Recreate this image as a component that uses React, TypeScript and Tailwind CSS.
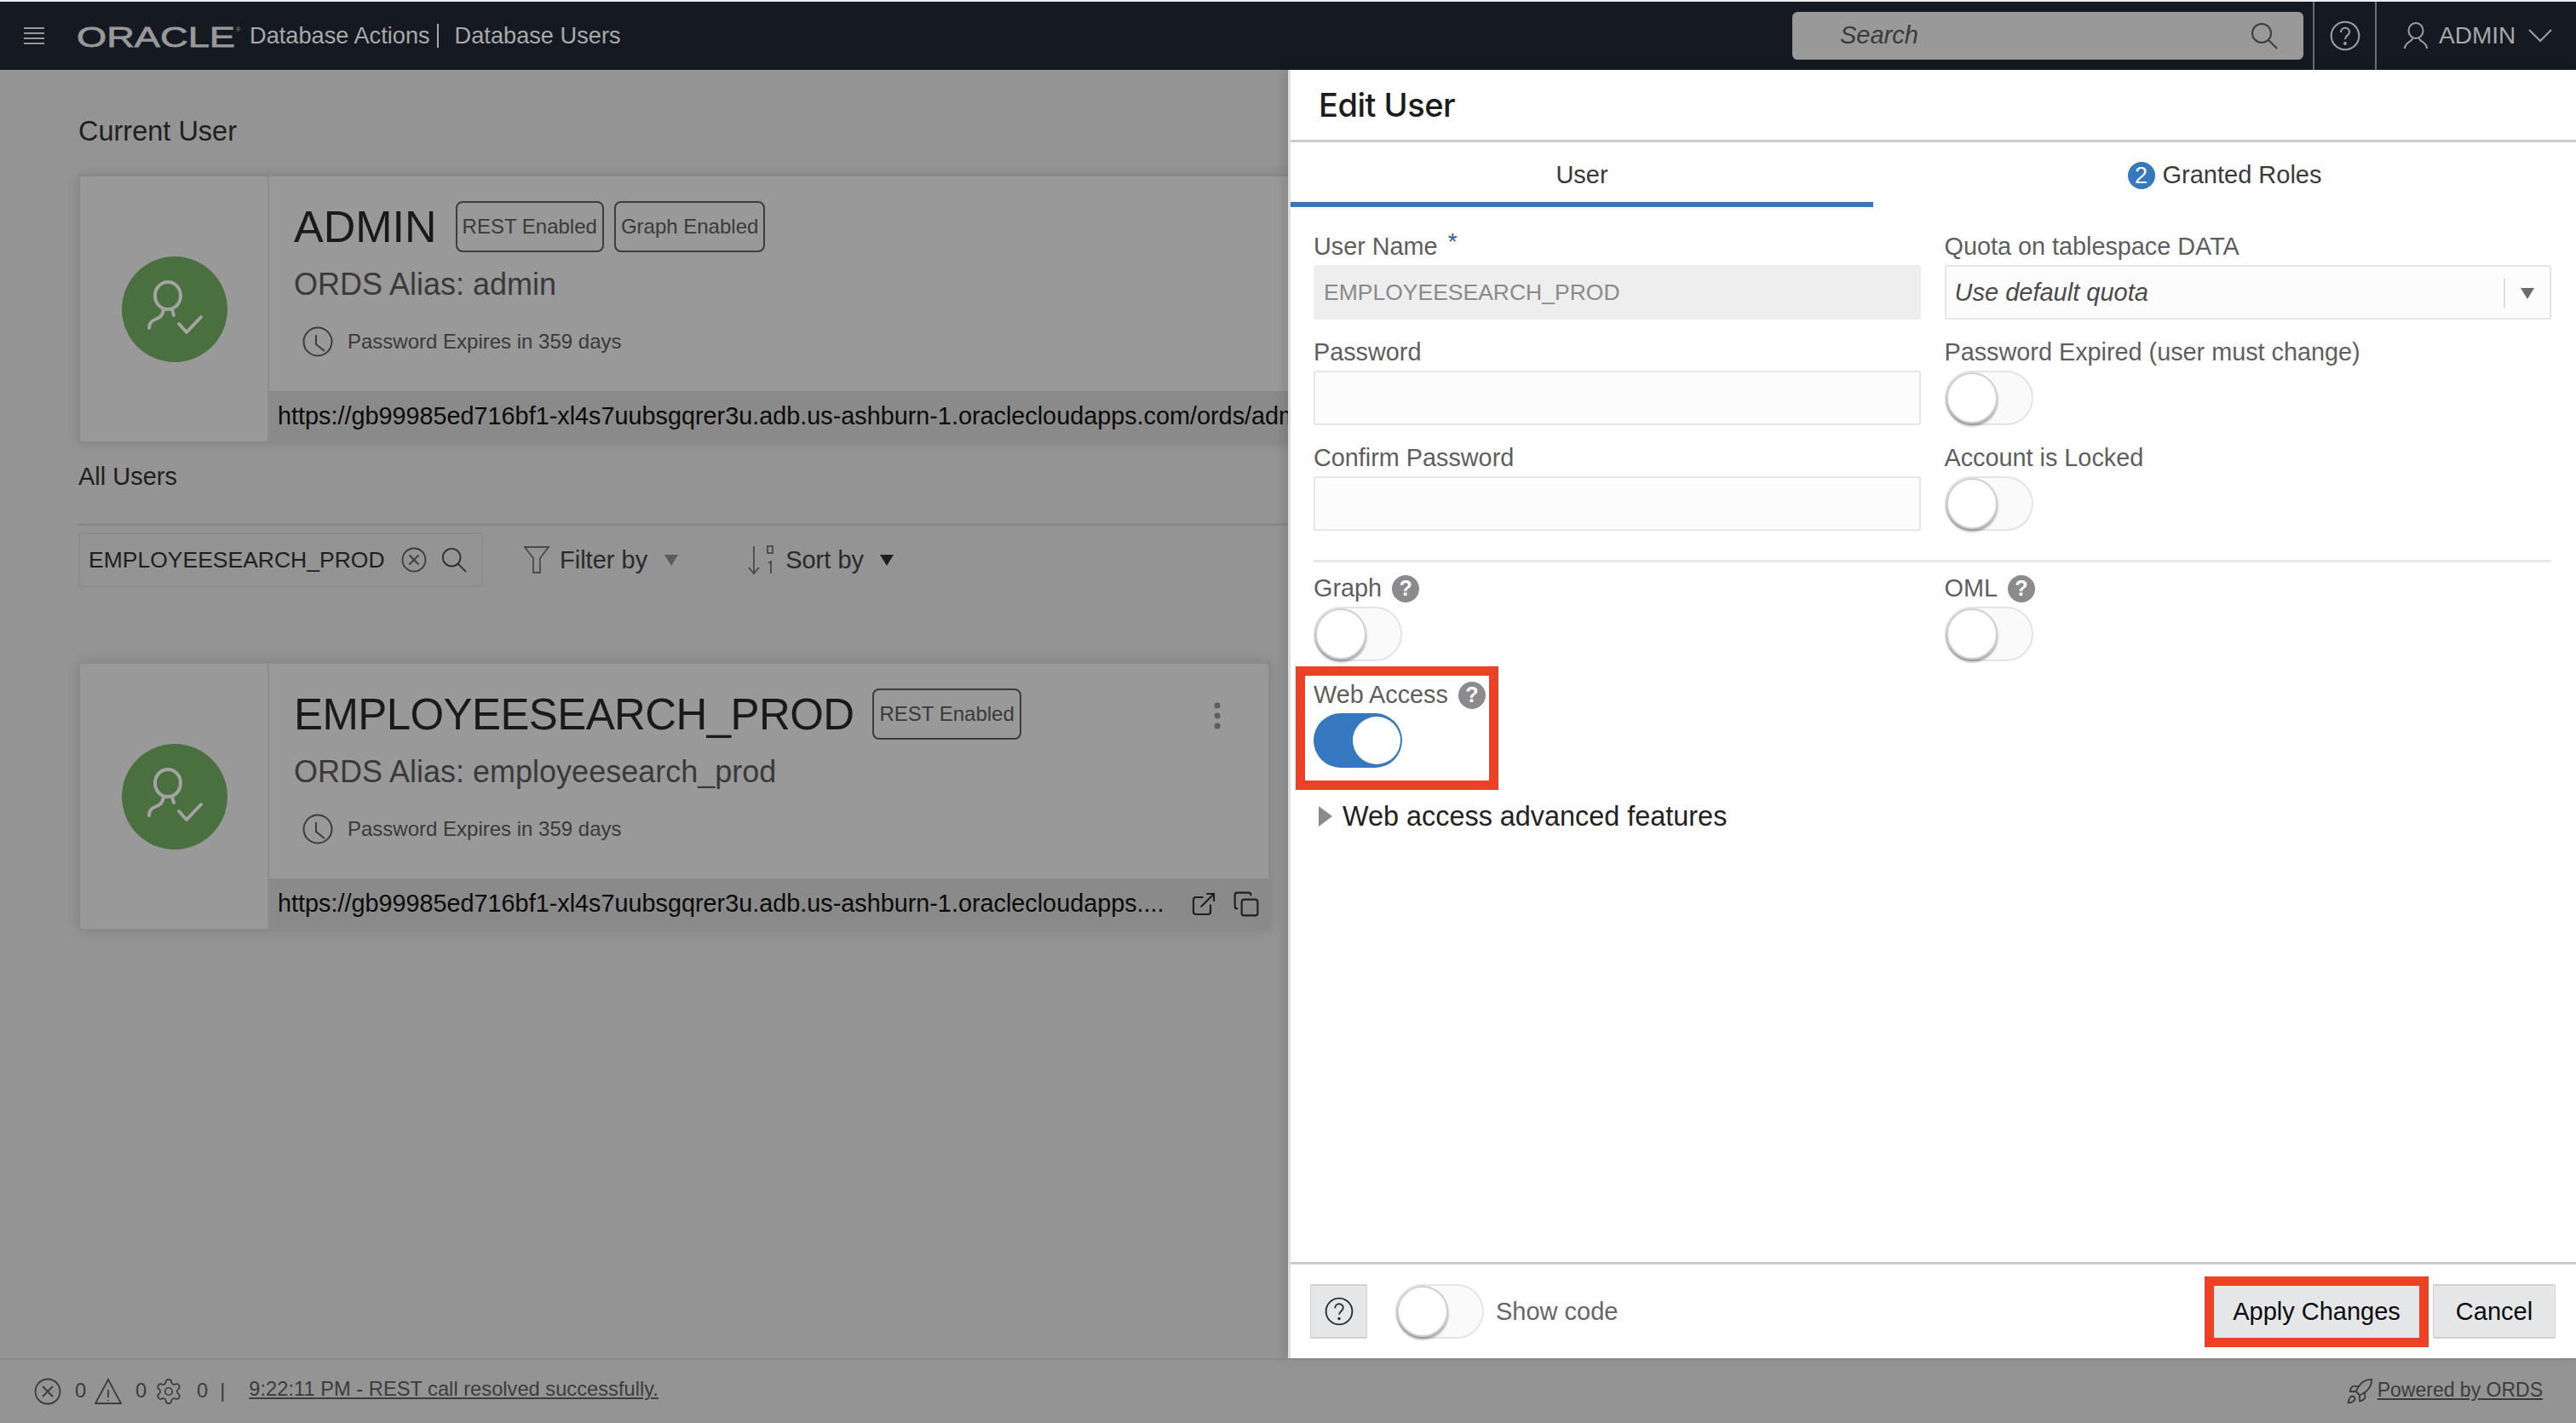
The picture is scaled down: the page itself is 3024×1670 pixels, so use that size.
import React from "react";
import { Settings, Rocket, ExternalLink, Copy } from "lucide-react";

const URL1 = "https://gb99985ed716bf1-xl4s7uubsgqrer3u.adb.us-ashburn-1.oraclecloudapps.com/ords/admin/_sdw/";
const URL2 = "https://gb99985ed716bf1-xl4s7uubsgqrer3u.adb.us-ashburn-1.oraclecloudapps....";

function Tri({ color }: { color: string }) {
  return (
    <svg width="18" height="18" viewBox="0 0 18 18" className="shrink-0">
      <path d="M1 3h16L9 16z" fill={color} />
    </svg>
  );
}

function Avatar() {
  return (
    <div className="w-[222px] shrink-0 pl-[2px] border-r-2 border-[#8c8c8c] flex items-center justify-center">
      <svg width="124" height="124" viewBox="0 0 124 124">
        <circle cx="62" cy="62" r="62" fill="#4a7040" />
        <g fill="none" stroke="#a3a3a3" strokeWidth="4" strokeLinecap="round" strokeLinejoin="round">
          <ellipse cx="54" cy="46" rx="15" ry="16" />
          <path d="M49 62C48 70 44 72 39 74C34 76 32 79 32 84" />
          <path d="M59 62L61 69" />
          <path d="M67 79L76 89L93 71" />
        </g>
      </svg>
    </div>
  );
}

function Badge({ children }: { children: React.ReactNode }) {
  return (
    <span className="h-[60px] px-[6px] flex items-center border-2 border-[#3c3c3c] rounded-[8px] text-[24px] text-[#3a3a3a] whitespace-nowrap">
      {children}
    </span>
  );
}

function Clock() {
  return (
    <svg width="36" height="36" viewBox="0 0 36 36" fill="none" stroke="#3c3c3c" strokeWidth="2" className="shrink-0">
      <circle cx="18" cy="18" r="16.5" />
      <path d="M16 10v11l10 8" />
    </svg>
  );
}

function Card({ name, nameClass, badges, alias, url, width, actions }: { name: string; nameClass: string; badges: string[]; alias: string; url: string; width: string; actions?: boolean }) {
  return (
    <div className={`${width} h-[315px] shrink-0 flex bg-[#999999] border-2 border-[#8a8a8a] shadow-[0_0_14px_rgba(0,0,0,0.12)]`}>
      <Avatar />
      <div className="flex-1 min-w-0 flex flex-col">
        <div className="flex-1 pl-[29px] pt-[29px] relative">
          <div className="flex items-center gap-[12px] h-[60px]">
            <span className={`${nameClass} leading-none text-[#1a1a1a] mr-[10px] whitespace-nowrap`}>{name}</span>
            {badges.map((b) => (
              <Badge key={b}>{b}</Badge>
            ))}
          </div>
          <div className="mt-[16px] text-[36px] leading-[44px] text-[#3a3a3a]">{alias}</div>
          <div className="mt-[25px] ml-[10px] flex items-center gap-[17px] text-[24px] text-[#3a3a3a] h-[40px]">
            <Clock />
            <span>Password Expires in 359 days</span>
          </div>
          {actions && (
            <svg width="12" height="32" viewBox="0 0 12 32" className="absolute right-[54px] top-[45px]">
              <circle cx="6" cy="4" r="3.5" fill="#5e5e5e" />
              <circle cx="6" cy="16" r="3.5" fill="#5e5e5e" />
              <circle cx="6" cy="28" r="3.5" fill="#5e5e5e" />
            </svg>
          )}
        </div>
        <div className="h-[59px] bg-[#8a8a8a] flex items-center pl-[10px] text-[28.8px] text-[#0a0a0a]">
          <span className={actions ? "w-[1053px] whitespace-nowrap" : "whitespace-nowrap"}>{url}</span>
          {actions && (
            <div className="flex items-center gap-[18px] ml-[18px] text-[#1f1f1f]">
              <ExternalLink size={32} strokeWidth={1.6} />
              <Copy size={32} strokeWidth={1.6} />
            </div>
          )}
        </div>
      </div>
    </div>
  );
}

function Toggle({ on }: { on?: boolean }) {
  if (on)
    return (
      <div className="w-[104px] h-[64px] rounded-full bg-[#3578c0] flex items-center justify-end pr-[2px]">
        <div className="w-[56px] h-[56px] rounded-full bg-white" />
      </div>
    );
  return (
    <div className="w-[104px] h-[64px] rounded-full bg-[#fafafa] border-2 border-[#e4e4e4] flex items-center">
      <div className="w-[60px] h-[60px] rounded-full bg-white border-2 border-[#cfcfcf] shadow-[0_3px_3px_rgba(0,0,0,0.35)]" />
    </div>
  );
}

function HelpDot() {
  return (
    <span className="w-[32px] h-[32px] rounded-full bg-[#8b8b8e] flex items-center justify-center text-white text-[25px] font-bold leading-none">?</span>
  );
}

function Label({ children }: { children: React.ReactNode }) {
  return <div className="h-[44px] pt-[1px] flex items-center gap-[12px] text-[28.8px] text-[#5e5e5e] whitespace-nowrap">{children}</div>;
}

function Input() {
  return <div className="h-[64px] bg-[#fcfcfc] border-2 border-[#e6e6e6] rounded-[3px]" />;
}

function QuestionCircle({ size, color }: { size: number; color: string }) {
  return (
    <svg width={size} height={size} viewBox="0 0 32 32" fill="none" stroke={color} strokeWidth="1.8" className="shrink-0">
      <circle cx="16" cy="16" r="14.5" />
      <path d="M11.5 12.5c0-3 2-4.700 4.500-4.700s4.500 1.700 4.500 4.300c0 3.500-4.500 3.700-4.500 7.400" />
      <circle cx="16" cy="24" r="0.8" fill={color} />
    </svg>
  );
}

function Magnifier({ color, size = 32 }: { color: string; size?: number }) {
  return (
    <svg width={size} height={size} viewBox="0 0 32 32" fill="none" stroke={color} strokeWidth="2" className="shrink-0">
      <circle cx="13" cy="13" r="11" />
      <path d="M21 21l10 10" />
    </svg>
  );
}

export default function App() {
  return (
    <div className="w-[3024px] h-[1670px] overflow-hidden flex flex-col bg-[#949494] font-['Liberation_Sans',Arial,sans-serif]">
      <div className="h-[2px] bg-[#eeeeee]" />
      <header className="h-[80px] shrink-0 bg-[#141922] flex items-stretch text-[#a8a8a8]">
        <div className="flex items-center pl-[28px] flex-1 min-w-0">
          <svg width="24" height="22" viewBox="0 0 24 22" stroke="#989898" strokeWidth="2">
            <path d="M0 2h24M0 8h24M0 14h24M0 20h24" />
          </svg>
          <svg width="194" height="48" viewBox="0 0 194 48" className="ml-[38px] shrink-0">
            <text x="0" y="37" fontSize="34" fontFamily="Liberation Sans" textLength="186" lengthAdjust="spacingAndGlyphs" fill="#989898" stroke="#989898" strokeWidth="0.8">ORACLE</text>
            <text x="187" y="19" fontSize="7" fontFamily="Liberation Sans" fill="#989898">®</text>
          </svg>
          <span className="ml-[9px] text-[27.2px] whitespace-nowrap">Database Actions</span>
          <span className="ml-[8px] w-[2px] h-[28px] bg-[#a8a8a8]" />
          <span className="ml-[19px] text-[27.2px] whitespace-nowrap">Database Users</span>
        </div>
        <div className="flex items-center mr-[11px]">
          <div className="w-[600px] h-[56px] bg-[#999999] rounded-[6px] flex items-center justify-between pl-[56px] pr-[30px]">
            <span className="italic text-[29px] text-[#3a3a3a]">Search</span>
            <Magnifier color="#3c3c3c" />
          </div>
        </div>
        <div className="w-[75px] border-x-2 border-[#6a6e74] flex items-center justify-center">
          <QuestionCircle size={36} color="#a0a0a0" />
        </div>
        <div className="w-[234px] flex items-center pl-[31px]">
          <svg width="30" height="32" viewBox="0 0 30 32" fill="none" stroke="#a0a0a0" strokeWidth="2">
            <ellipse cx="15" cy="10" rx="8.500" ry="9" />
            <path d="M11 19c0 4-9 4-9 12M19 19c0 4 9 4 9 12" />
          </svg>
          <span className="ml-[12px] text-[28px]">ADMIN</span>
          <svg width="28" height="16" viewBox="0 0 28 16" fill="none" stroke="#a0a0a0" strokeWidth="2" className="ml-[15px]">
            <path d="M1 1l13 13L27 1" />
          </svg>
        </div>
      </header>

      <div className="h-[1512px] shrink-0 flex">
        <main className="w-[1512px] shrink-0 overflow-hidden pl-[92px] flex flex-col">
          <div className="mt-[52px] h-[40px] flex items-center text-[32.5px] text-[#1f1f1f]">Current User</div>
          <div className="mt-[31px]">
            <Card name="ADMIN" nameClass="text-[52px]" badges={["REST Enabled", "Graph Enabled"]} alias="ORDS Alias: admin" url={URL1} width="w-[1500px]" />
          </div>
          <div className="mt-[22px] h-[36px] flex items-center text-[29px] text-[#1f1f1f]">All Users</div>
          <div className="mt-[36px] h-[3px] bg-[#888888]" />
          <div className="mt-[8px] flex items-center h-[64px]">
            <div className="w-[475px] h-[64px] border-2 border-[#8c8c8c] rounded-[3px] flex items-center pl-[10px] text-[26.5px] text-[#1f1f1f]">
              <span className="w-[372px] pt-[2px] whitespace-nowrap">EMPLOYEESEARCH_PROD</span>
              <svg width="30" height="30" viewBox="0 0 30 30" fill="none" stroke="#3c3c3c" strokeWidth="1.8" className="-ml-[5px]">
                <circle cx="15" cy="15" r="13.500" />
                <path d="M9.500 9.500l11 11M20.500 9.500l-11 11" />
              </svg>
              <span className="ml-[17px]"><Magnifier color="#2f2f2f" size={30} /></span>
            </div>
            <svg width="30" height="32" viewBox="0 0 30 32" fill="none" stroke="#4a4a4a" strokeWidth="1.800" className="ml-[48px]">
              <path d="M1 1h28L19 14v17h-8V14z" />
            </svg>
            <span className="ml-[12px] pt-[2px] text-[29px] text-[#2a2a2a]">Filter by</span>
            <span className="ml-[19px]"><Tri color="#5c5c5c" /></span>
            <svg width="32" height="36" viewBox="0 0 32 36" fill="none" stroke="#4a4a4a" strokeWidth="1.800" className="ml-[80px]">
              <path d="M8 2v32M2 27l6 7 6-7" />
              <rect x="24" y="2" width="6" height="8" />
              <path d="M25 22l3-2v14" />
            </svg>
            <span className="ml-[13px] pt-[2px] text-[29px] text-[#2a2a2a]">Sort by</span>
            <span className="ml-[18px]"><Tri color="#1f1f1f" /></span>
          </div>
          <div className="mt-[88px]">
            <Card name="EMPLOYEESEARCH_PROD" nameClass="text-[51px] tracking-[-0.6px]" badges={["REST Enabled"]} alias="ORDS Alias: employeesearch_prod" url={URL2} width="w-[1399px]" actions />
          </div>
        </main>

        <aside className="w-[1512px] shrink-0 bg-white border-l-[3px] border-[#dddddd] flex flex-col shadow-[-6px_0_10px_rgba(0,0,0,0.1)]">
          <div className="h-[85px] shrink-0 border-b-[3px] border-[#cccccc] flex items-center pl-[33px] text-[38px] text-[#1c1c1c] font-['Inter',sans-serif] font-medium tracking-[-0.5px]">
            Edit User
          </div>
          <div className="h-[76px] shrink-0 flex text-[29px] text-[#3a3a3a]">
            <div className="w-[684px] border-b-[6px] border-[#3578c0] flex items-center justify-center pt-[8px]">User</div>
            <div className="flex-1 flex items-center justify-center gap-[9px] pt-[2px]">
              <span className="w-[32px] h-[32px] rounded-full bg-[#3578c0] text-white text-[27px] flex items-center justify-center">2</span>
              Granted Roles
            </div>
          </div>

          <div className="flex-1 pl-[27px] pr-[29px] pt-[24px]">
            <div className="grid grid-cols-2 gap-x-[28px] gap-y-[16px]">
              <div>
                <Label>
                  User Name <span className="text-[#2a5fa0] text-[28px] -mt-[12px]">*</span>
                </Label>
                <div className="h-[64px] pt-[2px] bg-[#eeeeee] rounded-[3px] flex items-center pl-[12px] text-[26.5px] text-[#8a8a8a]">EMPLOYEESEARCH_PROD</div>
              </div>
              <div>
                <Label>Quota on tablespace DATA</Label>
                <div className="h-[64px] pt-[1px] bg-[#fcfcfc] border-2 border-[#e6e6e6] rounded-[3px] flex items-center pl-[10px] text-[29px] italic text-[#4a4a4a]">
                  <span className="flex-1">Use default quota</span>
                  <span className="w-[2px] h-[36px] bg-[#e0e0e0]" />
                  <span className="mx-[17px]"><Tri color="#6a6a6a" /></span>
                </div>
              </div>
              <div>
                <Label>Password</Label>
                <Input />
              </div>
              <div>
                <Label>Password Expired (user must change)</Label>
                <Toggle />
              </div>
              <div>
                <Label>Confirm Password</Label>
                <Input />
              </div>
              <div>
                <Label>Account is Locked</Label>
                <Toggle />
              </div>
            </div>
            <div className="mt-[34px] mb-[8px] h-[3px] bg-[#e6e6e6]" />
            <div className="grid grid-cols-2 gap-x-[28px]">
              <div>
                <Label>
                  Graph <HelpDot />
                </Label>
                <Toggle />
              </div>
              <div>
                <Label>
                  OML <HelpDot />
                </Label>
                <Toggle />
              </div>
            </div>
            <div className="mt-[6px] -ml-[21px] w-[238px] h-[145px] border-[11px] border-[#ec4124] pl-[10px]">
              <Label>
                Web Access <HelpDot />
              </Label>
              <Toggle on />
            </div>
            <div className="mt-[11px] ml-[6px] h-[40px] flex items-center gap-[12px] text-[32.4px] text-[#222222]">
              <svg width="16" height="24" viewBox="0 0 16 24"><path d="M0 0l16 12L0 24z" fill="#8b8b8e" /></svg>
              Web access advanced features
            </div>
          </div>

          <div className="h-[113px] shrink-0 border-t-[3px] border-[#cccccc] flex items-center pl-[23px] pr-[24px]">
            <div className="w-[67px] h-[64px] bg-[#e4e6e8] border-y-2 border-x border-[#cfd1d3] rounded-[2px] flex items-center justify-center">
              <QuestionCircle size={34} color="#2f2f2f" />
            </div>
            <span className="ml-[33px]"><Toggle /></span>
            <span className="ml-[14px] pt-[2px] text-[29px] text-[#666666] flex-1">Show code</span>
            <div className="w-[263px] h-[83px] pt-[1px] border-[11px] border-[#ec4124] flex items-center justify-center bg-[#e4e6e8] text-[29px] text-[#0a0a0a]">
              Apply Changes
            </div>
            <div className="ml-[5px] w-[144px] h-[64px] pt-[1px] bg-[#e4e6e8] border-y-2 border-x border-[#cfd1d3] rounded-[2px] flex items-center justify-center text-[29px] text-[#0a0a0a]">
              Cancel
            </div>
          </div>
        </aside>
      </div>

      <footer className="h-[76px] shrink-0 border-t-2 border-[#888888] flex items-center pl-[40px] pr-[39px] text-[23.7px] text-[#3c3c3c]">
        <svg width="32" height="32" viewBox="0 0 32 32" fill="none" stroke="#3c3c3c" strokeWidth="1.800">
          <circle cx="16" cy="16" r="14.500" />
          <path d="M10 10l12 12M22 10L10 22" />
        </svg>
        <span className="ml-[16px] w-[23px]">0</span>
        <svg width="32" height="32" viewBox="0 0 32 32" fill="none" stroke="#3c3c3c" strokeWidth="1.800">
          <path d="M16 2L31 30H1z" />
          <path d="M16 14v9M16 26v1" />
        </svg>
        <span className="ml-[16px] w-[22px]">0</span>
        <Settings size={34} strokeWidth={1.2} />
        <span className="ml-[16px]">0</span>
        <span className="ml-[14px]">|</span>
        <span className="ml-[28px] pb-[4px] underline flex-1">9:22:11 PM - REST call resolved successfully.</span>
        <Rocket size={34} strokeWidth={1.3} />
        <span className="ml-[4px] pb-[4px] text-[23px] underline">Powered by ORDS</span>
      </footer>
    </div>
  );
}
